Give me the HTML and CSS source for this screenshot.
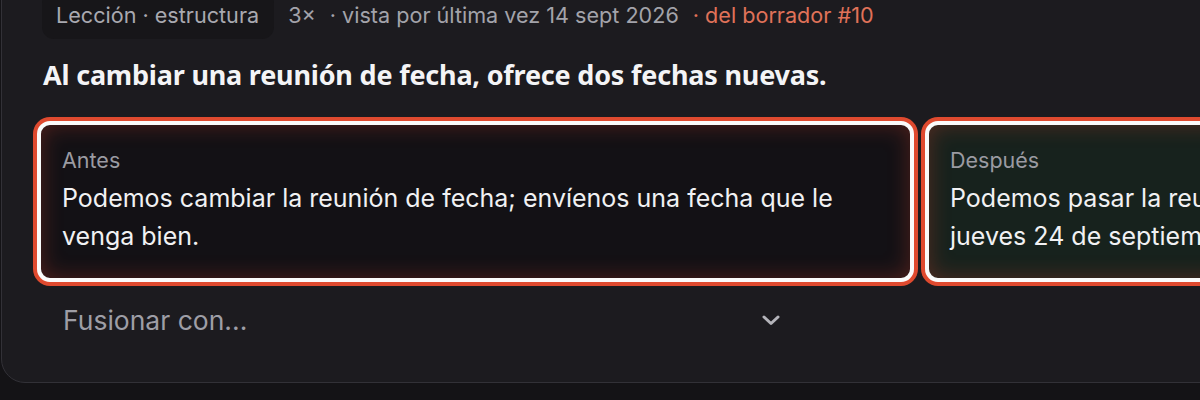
FILE: index.html
```html
<!DOCTYPE html>
<html lang="es">
<head>
<meta charset="utf-8">
<title>Lección</title>
<link rel="stylesheet" href="styles.css">
</head>
<body>
<section class="panel">
  <div class="meta">
    <span class="chip">Lección · estructura</span>
    <span class="count">3×</span>
    <span class="seen">· vista por última vez 14 sept 2026</span>
    <span class="source">· del borrador #10</span>
  </div>
  <h2 class="rule">Al cambiar una reunión de fecha, ofrece dos fechas nuevas.</h2>
  <div class="compare">
    <div class="sample sample-before">
      <div class="sample-label">Antes</div>
      <p class="sample-text">Podemos cambiar la reunión de fecha; envíenos una fecha que le venga bien.</p>
    </div>
    <div class="sample sample-after">
      <div class="sample-label">Después</div>
      <p class="sample-text">Podemos pasar la reunión al martes 22 a las 10:00 o también al jueves 24 de septiembre.</p>
    </div>
  </div>
  <div class="merge">
    <span class="merge-text">Fusionar con...</span>
    <svg class="chev" width="18" height="12" viewBox="0 0 18 12" aria-hidden="true"><path d="M2 3 L9 9.5 L16 3" fill="none" stroke="#b4b4ba" stroke-width="3" stroke-linecap="round" stroke-linejoin="round"/></svg>
  </div>
</section>
</body>
</html>
```

FILE: styles.css
```css
html, body {
  margin: 0;
  padding: 0;
  background: #141316;
  overflow: hidden;
  width: 1200px;
  height: 400px;
}
body {
  font-family: Inter, "Noto Sans", sans-serif;
  color: #ececef;
}
.panel {
  box-sizing: border-box;
  margin: -30px 0 0 1px;
  width: 1960px;
  height: 413px;
  background: #1c1b1f;
  border: 1px solid #323137;
  border-radius: 24px;
  padding: 21px 0 0 41px;
}
.meta {
  display: flex;
  align-items: center;
  font-size: 21.6px;
  color: #a3a3aa;
  height: 46px;
  white-space: nowrap;
}
.chip {
  background: #171619;
  border-radius: 12px;
  padding: 11px 15px 11px 14px;
  color: #a9a9b0;
  margin: 0 14px 0 -1px;
}
.count { margin-right: 14px; }
.seen { margin-right: 14px; }
.source { color: #e07259; }
.rule {
  margin: 20px 0 0 0;
  font-family: "Noto Sans", sans-serif;
  font-weight: 700;
  font-size: 27px;
  line-height: 34px;
  color: #f4f4f6;
  letter-spacing: -0.2px;
}
.compare {
  display: grid;
  grid-template-columns: 877px 877px;
  gap: 11px;
  margin: 29px 0 0 -6px;
}
.sample {
  box-sizing: border-box;
  height: 161px;
  border: 4px solid #fbfbfb;
  border-radius: 13px;
  box-shadow: 0 0 0 4px #df4a2f, inset 0 0 22px rgba(210, 65, 42, 0.33);
  padding: 21px 21px 23px;
}
.sample-before { background: #131115; }
.sample-after { background: #17221d; }
.sample-label {
  font-size: 21.5px;
  line-height: 28px;
  color: #9b9ba2;
}
.sample-text {
  margin: 5px 0 0;
  font-size: 25px;
  line-height: 38px;
  color: #f1f1f3;
}
.merge {
  display: flex;
  align-items: center;
  justify-content: space-between;
  width: 717px;
  margin: 23px 0 0 20px;
  height: 30px;
}
.merge-text {
  font-size: 26.5px;
  color: #9e9ea6;
}
.chev { display: block; }
```
